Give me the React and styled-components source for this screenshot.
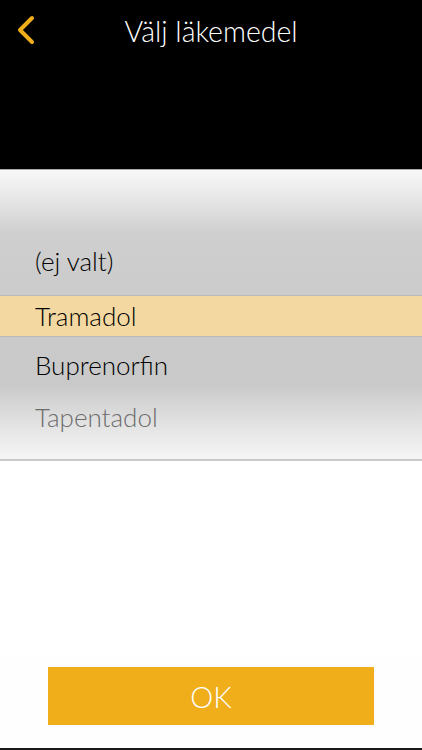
import React from 'react';
import styled, { createGlobalStyle } from 'styled-components';

const drugs = [
  { name: '(ej valt)', tone: 'normal' },
  { name: 'Tramadol', tone: 'selected' },
  { name: 'Buprenorfin', tone: 'normal' },
  { name: 'Tapentadol', tone: 'faded' },
];

const App = () => (
  <>
    <GlobalStyle />
    <Screen>
      <Header>
        <TitleBar>
          <BackButton aria-label="Tillbaka">
            <svg width="18" height="30" viewBox="0 0 18 30">
              <path d="M15 3 L3 15 L15 27" fill="none" stroke="#f0ae1b" strokeWidth="4" strokeLinecap="round" strokeLinejoin="round" />
            </svg>
          </BackButton>
          <Title>Välj läkemedel</Title>
        </TitleBar>
      </Header>

      <Picker>
        {drugs.map((d) => (
          <PickerRow key={d.name} tone={d.tone}>
            {d.name}
          </PickerRow>
        ))}
      </Picker>

      <Body />

      <Footer>
        <OkButton>OK</OkButton>
      </Footer>
    </Screen>
  </>
);

const GlobalStyle = createGlobalStyle`
  html, body {
    margin: 0;
    padding: 0;
    background: #ffffff;
  }
  body {
    font-family: 'Lato', 'Open Sans', sans-serif;
  }
`;

const Screen = styled.div`
  width: 422px;
  height: 750px;
  display: flex;
  flex-direction: column;
  background: #ffffff;
  border-bottom: 2px solid #1a1a1a;
  box-sizing: border-box;
  overflow: hidden;
`;

const Header = styled.header`
  height: 169px;
  background: #000000;
  flex-shrink: 0;
`;

const TitleBar = styled.div`
  position: relative;
  height: 62px;
  display: flex;
  align-items: center;
  justify-content: center;
`;

const BackButton = styled.button`
  position: absolute;
  left: 17px;
  top: 15px;
  padding: 0;
  border: none;
  background: none;
  display: flex;
`;

const Title = styled.h1`
  margin: 0;
  font-size: 28.5px;
  font-weight: 300;
  color: #ffffff;
`;

const Picker = styled.div`
  height: 292px;
  flex-shrink: 0;
  box-sizing: border-box;
  padding-top: 65px;
  display: flex;
  flex-direction: column;
  border-top: 1px solid #a9a9a9;
  border-bottom: 2px solid #c9c9c9;
  background: linear-gradient(
    to bottom,
    #f8f8f8 0px,
    #e6e6e6 30px,
    #cfcfcf 62px,
    #cbcbcb 130px,
    #c9c9c9 215px,
    #e3e3e3 255px,
    #f6f6f6 290px
  );
`;

const PickerRow = styled.div`
  box-sizing: border-box;
  flex-shrink: 0;
  height: ${(p) => (p.tone === 'selected' ? '42px' : '52px')};
  margin: ${(p) => (p.tone === 'selected' ? '8px 0 2px' : '0')};
  padding-bottom: ${(p) => (p.tone === 'selected' ? '1px' : '0')};
  display: flex;
  align-items: center;
  padding-left: 35px;
  font-size: 26px;
  font-weight: 300;
  color: ${(p) => (p.tone === 'faded' ? '#6c6c6c' : '#000000')};
  background: ${(p) => (p.tone === 'selected' ? '#f3d9a1' : 'transparent')};
  border-top: ${(p) => (p.tone === 'selected' ? '1px solid #b9b9b9' : 'none')};
  border-bottom: ${(p) => (p.tone === 'selected' ? '1px solid #b9b9b9' : 'none')};
`;

const Body = styled.div`
  flex: 1;
  background: #ffffff;
`;

const Footer = styled.div`
  display: flex;
  justify-content: center;
  padding: 12px 0 23px;
  background: #fefefe;
`;

const OkButton = styled.button`
  width: 326px;
  height: 58px;
  border: none;
  background: #f0ae1b;
  color: #ffffff;
  font-family: 'Lato', 'Open Sans', sans-serif;
  font-size: 29px;
  font-weight: 300;
  padding: 0;
  cursor: pointer;
`;

export default App;
